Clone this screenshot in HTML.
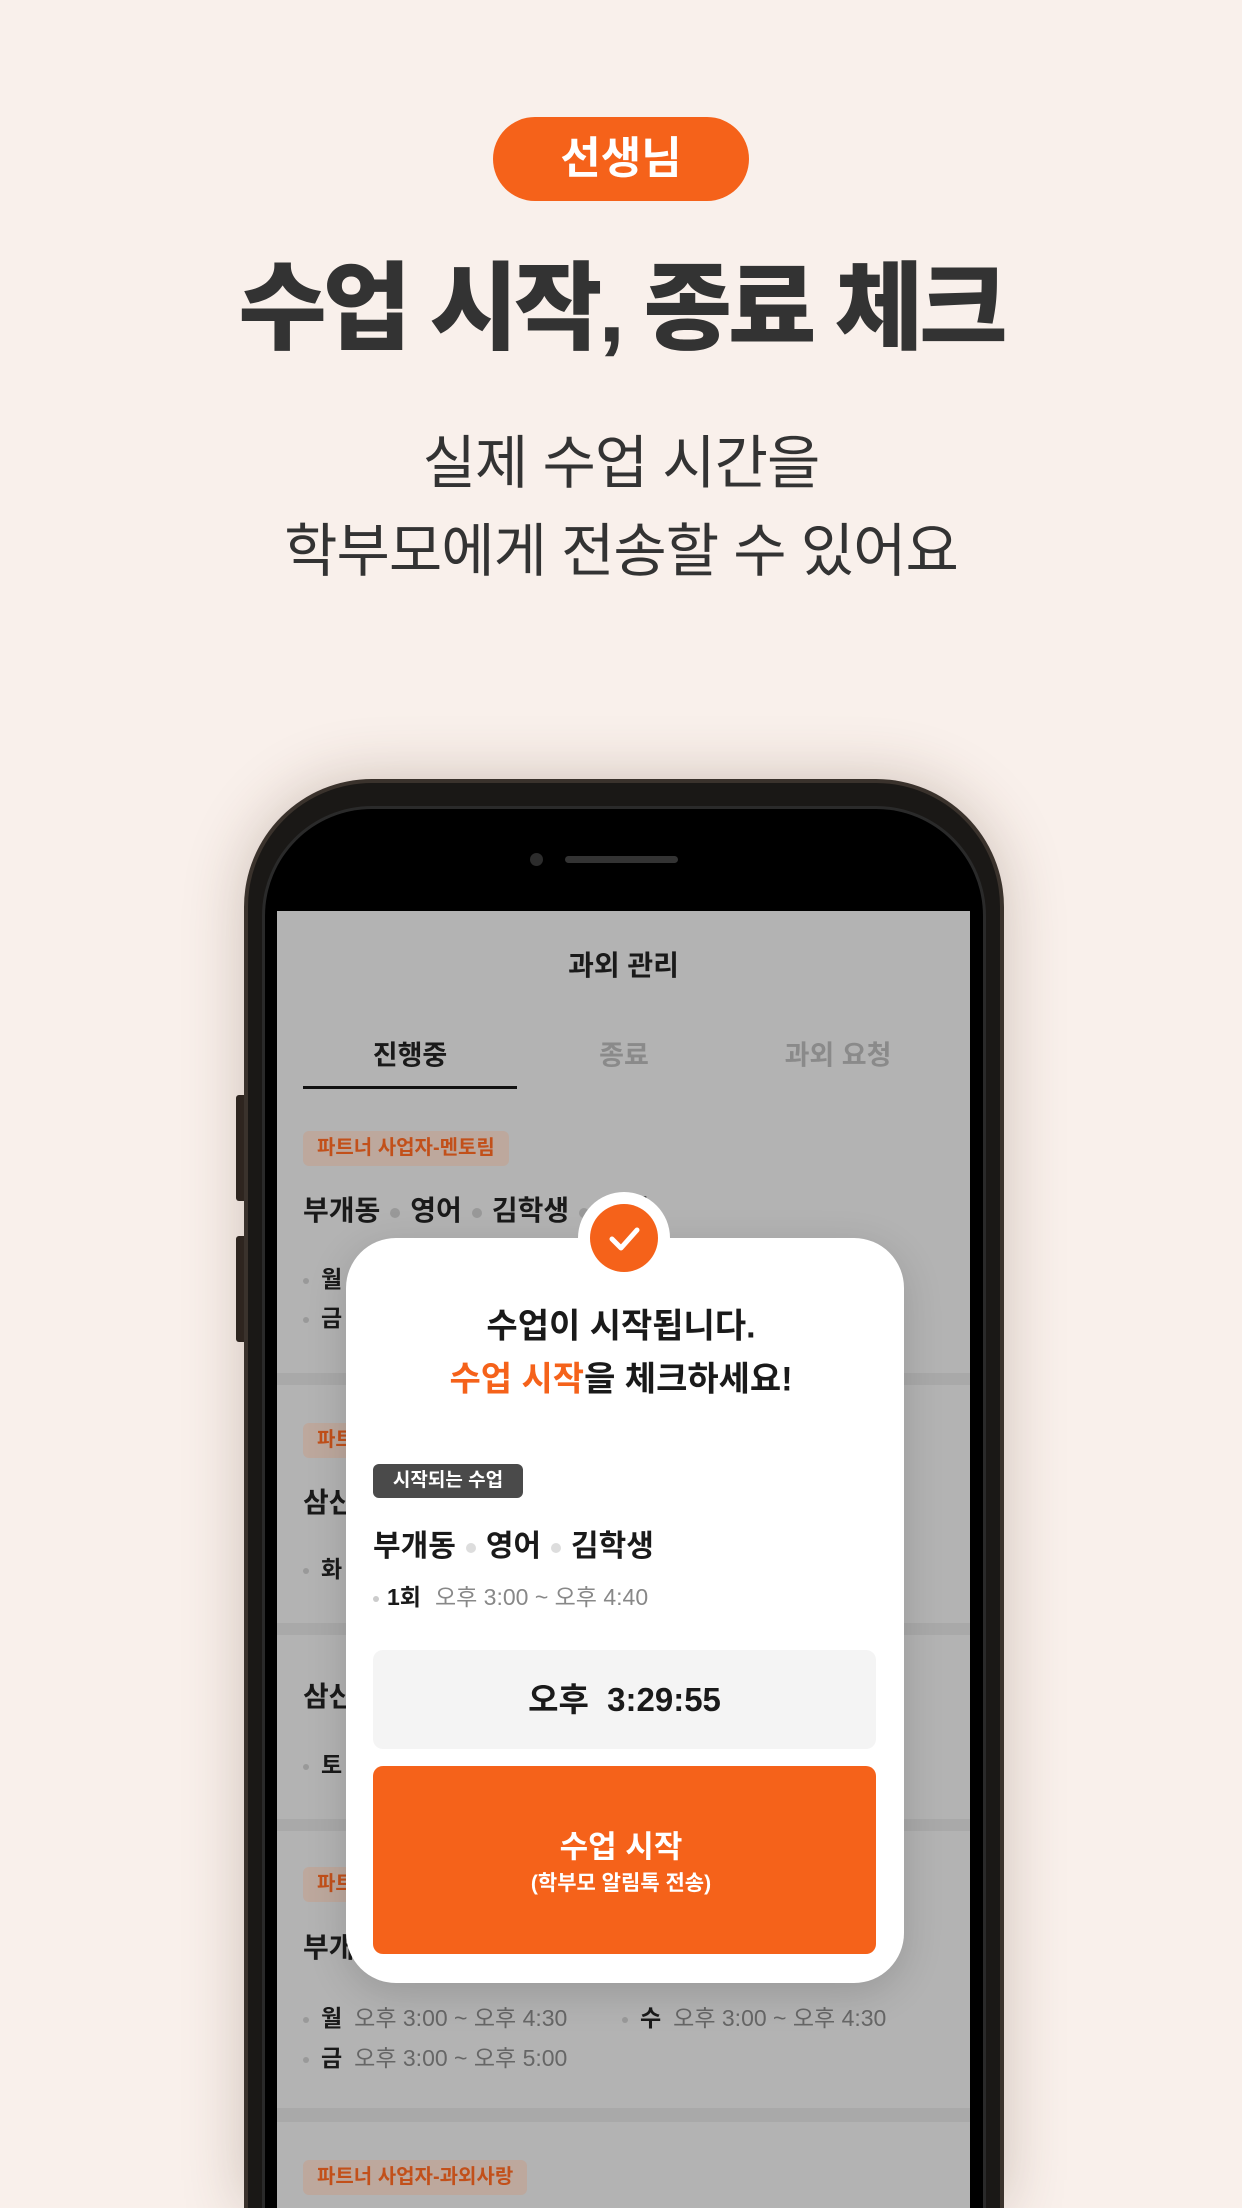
<!DOCTYPE html>
<html style="width:1242px;height:2208px;overflow:hidden"><head><meta charset="utf-8"><style>
*{margin:0;padding:0;box-sizing:border-box}
html,body{width:1242px;height:2208px;overflow:hidden}
body{background:#f9f0eb;position:relative;font-family:"Liberation Sans","Noto Sans CJK KR",sans-serif;color:#333}
.a{position:absolute}
.c{position:absolute;left:0;width:1242px;text-align:center}
.pill{left:493px;top:117px;width:256px;height:84px;border-radius:42px;background:#f5621a;color:#fff;font-size:44px;font-weight:700;text-align:center;line-height:84px}
.t{transform:translateY(-50%);white-space:nowrap}
.dot{display:inline-block;width:10px;height:10px;border-radius:50%;background:#999;vertical-align:middle;margin:0 10px}
.sdot{display:inline-block;width:6px;height:6px;border-radius:50%;background:#999;vertical-align:middle;margin-right:12px}
.tag{background:#bda89d;color:#c2501a;font-size:20px;font-weight:700;border-radius:6px;padding:0 14px;height:35px;line-height:35px}
.band{left:0;width:693px;height:12px;background:#a9a9a9}
.row{font-size:28px;font-weight:700;color:#1a1a1a}
.sch{font-size:23px;color:#666}
.sch b{color:#1a1a1a;margin-right:12px}
</style></head><body>
<div class="a pill">선생님</div>
<div class="c t" style="top:300px;font-size:96px;font-weight:900;color:#333;letter-spacing:-4px">수업 시작, 종료 체크</div>
<div class="c t" style="top:458px;font-size:58px;color:#333;letter-spacing:-1px">실제 수업 시간을</div>
<div class="c t" style="top:546px;font-size:58px;color:#333;letter-spacing:-1px">학부모에게 전송할 수 있어요</div>

<div class="a" style="left:236px;top:1095px;width:8px;height:106px;background:#2a2420;border-radius:3px 0 0 3px"></div>
<div class="a" style="left:236px;top:1236px;width:8px;height:106px;background:#2a2420;border-radius:3px 0 0 3px"></div>
<div class="a" style="left:244px;top:779px;width:760px;height:1429px;border-radius:128px 128px 0 0;background:#1a1816;border:4px solid #3a322c;border-bottom:none;box-shadow:0 0 60px rgba(80,50,30,.25)"></div>
<div class="a" style="left:262px;top:806px;width:724px;height:1402px;border-radius:110px 110px 0 0;background:#000;border:3px solid #2a2a2a;border-bottom:none"></div>
<div class="a" style="left:530px;top:853px;width:13px;height:13px;border-radius:50%;background:#2c2c2c"></div>
<div class="a" style="left:565px;top:856px;width:113px;height:7px;border-radius:4px;background:#333"></div>

<div class="a" style="left:277px;top:911px;width:693px;height:1297px;background:#b3b3b3;overflow:hidden">
  <div class="a t" style="left:0;width:693px;text-align:center;top:53px;font-size:28px;font-weight:700;color:#1a1a1a">과외 관리</div>
  <div class="a t" style="left:26px;width:214px;text-align:center;top:142px;font-size:27px;font-weight:700;color:#1a1a1a">진행중</div>
  <div class="a t" style="left:240px;width:214px;text-align:center;top:142px;font-size:27px;font-weight:700;color:#8a8a8a">종료</div>
  <div class="a t" style="left:454px;width:214px;text-align:center;top:142px;font-size:27px;font-weight:700;color:#8a8a8a">과외 요청</div>
  <div class="a" style="left:26px;top:175px;width:214px;height:3px;background:#111"></div>

  <div class="a tag" style="left:26px;top:220px">파트너 사업자-멘토림</div>
  <div class="a t row" style="left:26px;top:298px">부개동<span class="dot"></span>영어<span class="dot"></span>김학생<span class="dot"></span>한나</div>
  <div class="a t sch" style="left:26px;top:366px"><span class="sdot"></span><b>월</b>오후 3:00 ~ 오후 4:30</div>
  <div class="a t sch" style="left:26px;top:405px"><span class="sdot"></span><b>금</b>오후 3:00 ~ 오후 5:00</div>
  <div class="a band" style="top:462px"></div>

  <div class="a tag" style="left:26px;top:512px">파트너 사업자-과외사랑</div>
  <div class="a t row" style="left:26px;top:590px">삼산동<span class="dot"></span>수학<span class="dot"></span>이학생</div>
  <div class="a t sch" style="left:26px;top:656px"><span class="sdot"></span><b>화</b>오후 3:00 ~ 오후 4:30</div>
  <div class="a t sch" style="left:345px;top:656px"><span class="sdot"></span><b>목</b>오후 3:00 ~ 오후 5:00</div>
  <div class="a band" style="top:712px"></div>

  <div class="a t row" style="left:26px;top:784px">삼산동<span class="dot"></span>국어<span class="dot"></span>박학생</div>
  <div class="a t sch" style="left:26px;top:852px"><span class="sdot"></span><b>토</b>오전 10:00 ~ 오후 12:00</div>
  <div class="a band" style="top:908px"></div>

  <div class="a tag" style="left:26px;top:956px">파트너 사업자-멘토림</div>
  <div class="a t row" style="left:26px;top:1035px">부개동<span class="dot"></span>영어<span class="dot"></span>최학생</div>
  <div class="a t sch" style="left:26px;top:1105px"><span class="sdot"></span><b>월</b>오후 3:00 ~ 오후 4:30</div>
  <div class="a t sch" style="left:345px;top:1105px"><span class="sdot"></span><b>수</b>오후 3:00 ~ 오후 4:30</div>
  <div class="a t sch" style="left:26px;top:1145px"><span class="sdot"></span><b>금</b>오후 3:00 ~ 오후 5:00</div>
  <div class="a band" style="top:1197px;height:14px"></div>
  <div class="a tag" style="left:26px;top:1249px">파트너 사업자-과외사랑</div>
</div>

<div class="a" style="left:346px;top:1238px;width:558px;height:745px;background:#fff;border-radius:50px;box-shadow:0 10px 40px rgba(0,0,0,.15)"></div>
<div class="a" style="left:578px;top:1192px;width:92px;height:92px;border-radius:50%;background:#fff"></div>
<div class="a" style="left:590px;top:1204px;width:68px;height:68px;border-radius:50%;background:#f5621a"></div>
<svg class="a" style="left:590px;top:1204px" width="68" height="68" viewBox="0 0 68 68"><path d="M22 35 L31 44 L47 26" fill="none" stroke="#fff" stroke-width="5" stroke-linecap="round" stroke-linejoin="round"/></svg>
<div class="c t" style="top:1323px;font-size:34px;font-weight:700;color:#1a1a1a">수업이 시작됩니다.</div>
<div class="c t" style="top:1376px;font-size:34px;font-weight:700;color:#1a1a1a"><span style="color:#f5621a">수업 시작</span>을 체크하세요!</div>
<div class="a" style="left:373px;top:1464px;width:150px;height:34px;background:#4a4a4a;border-radius:6px;color:#fff;font-size:19px;font-weight:700;text-align:center;line-height:34px">시작되는 수업</div>
<div class="a t" style="left:373px;top:1543px;font-size:30px;font-weight:700;color:#1a1a1a;white-space:nowrap">부개동<span class="dot" style="background:#ddd"></span>영어<span class="dot" style="background:#ddd"></span>김학생</div>
<div class="a t" style="left:373px;top:1595px;font-size:23px;color:#888;white-space:nowrap"><span class="sdot" style="background:#ccc;margin-right:8px"></span><b style="color:#1a1a1a;margin-right:14px">1회</b>오후 3:00 ~ 오후 4:40</div>
<div class="a" style="left:373px;top:1650px;width:503px;height:99px;background:#f4f4f4;border-radius:10px;text-align:center;line-height:99px;font-size:33px;font-weight:700;color:#1a1a1a">오후&nbsp;&nbsp;3:29:55</div>
<div class="a" style="left:373px;top:1766px;width:503px;height:188px;background:#f5621a;border-radius:10px"></div>
<div class="c t" style="top:1844px;font-size:31px;font-weight:700;color:#fff">수업 시작</div>
<div class="c t" style="top:1882px;font-size:21px;font-weight:700;color:#fff">(학부모 알림톡 전송)</div>
</body></html>
